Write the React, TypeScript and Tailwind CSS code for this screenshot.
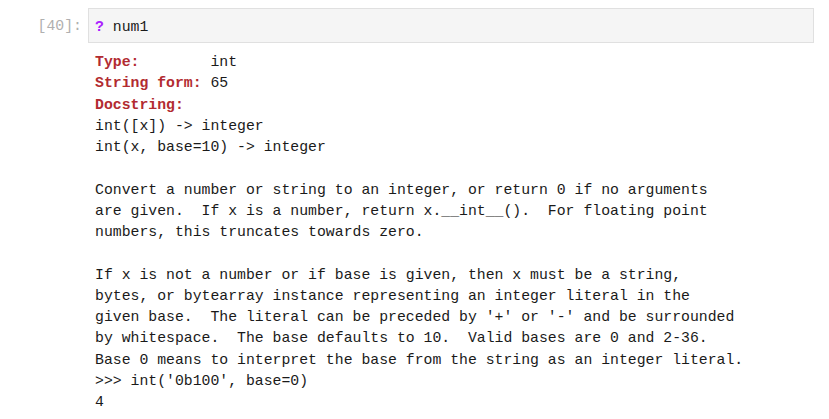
import React from "react";

const mono = { fontFamily: '"Liberation Mono", "DejaVu Sans Mono", monospace' };

export default function App() {
  const red = "font-bold text-[#b22b31]";
  return (
    <div className="w-[829px] h-[419px] bg-white overflow-hidden pt-[8px] text-[14.8px] leading-[21.25px] text-[#1a1a1a]" style={mono}>
      <div className="flex">
        <div className="w-[88px] shrink-0 pr-[6px] text-right text-[#b0b0b0] pt-[8px]">[40]:</div>
        <div className="w-[726px] h-[35px] border border-[#e0e0e0] bg-[#f5f5f5] pl-[6px] pt-[8px]">
          <span className="font-bold text-[#aa22ff]">?</span> num1
        </div>
      </div>
      <div className="pl-[95px] pt-[9px] whitespace-pre">
        <div><span className={red}>Type:</span>        int</div>
        <div><span className={red}>String form:</span> 65</div>
        <div><span className={red}>Docstring:</span></div>
        <div>int([x]) -&gt; integer</div>
        <div>int(x, base=10) -&gt; integer</div>
        <div>&nbsp;</div>
        <div>Convert a number or string to an integer, or return 0 if no arguments</div>
        <div>are given.  If x is a number, return x.__int__().  For floating point</div>
        <div>numbers, this truncates towards zero.</div>
        <div>&nbsp;</div>
        <div>If x is not a number or if base is given, then x must be a string,</div>
        <div>bytes, or bytearray instance representing an integer literal in the</div>
        <div>given base.  The literal can be preceded by '+' or '-' and be surrounded</div>
        <div>by whitespace.  The base defaults to 10.  Valid bases are 0 and 2-36.</div>
        <div>Base 0 means to interpret the base from the string as an integer literal.</div>
        <div>&gt;&gt;&gt; int('0b100', base=0)</div>
        <div>4</div>
      </div>
    </div>
  );
}
